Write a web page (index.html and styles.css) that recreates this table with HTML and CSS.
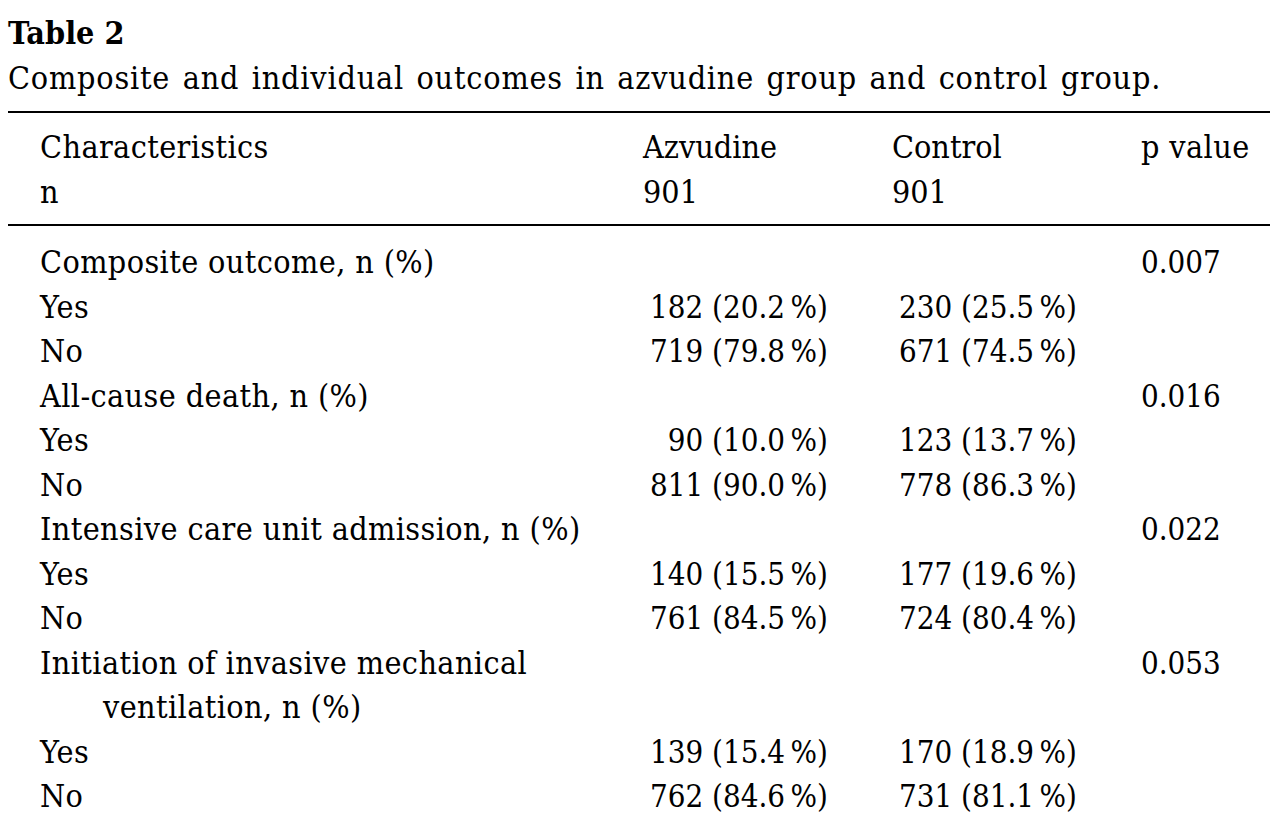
FILE: index.html
```html
<!DOCTYPE html>
<html lang="en">
<head>
<meta charset="utf-8">
<title>Table 2</title>
<link rel="stylesheet" href="styles.css">
</head>
<body>
<div class="page">
  <div class="caption">
    <div class="label">Table 2</div>
    <div class="desc">Composite and individual outcomes in azvudine group and control group.</div>
  </div>
  <div class="table">
    <div class="head">
      <div class="c1">Characteristics<br>n</div>
      <div class="c2">Azvudine<br>901</div>
      <div class="c3">Control<br>901</div>
      <div class="c4">p value</div>
    </div>
    <div class="body">
      <div class="c1">Composite outcome, n (%)</div><div class="num"></div><div class="num"></div><div class="c4">0.007</div>
      <div class="c1">Yes</div><div class="num">182 (20.2&#8201;%)</div><div class="num">230 (25.5&#8201;%)</div><div class="c4"></div>
      <div class="c1">No</div><div class="num">719 (79.8&#8201;%)</div><div class="num">671 (74.5&#8201;%)</div><div class="c4"></div>
      <div class="c1">All-cause death, n (%)</div><div class="num"></div><div class="num"></div><div class="c4">0.016</div>
      <div class="c1">Yes</div><div class="num">90 (10.0&#8201;%)</div><div class="num">123 (13.7&#8201;%)</div><div class="c4"></div>
      <div class="c1">No</div><div class="num">811 (90.0&#8201;%)</div><div class="num">778 (86.3&#8201;%)</div><div class="c4"></div>
      <div class="c1">Intensive care unit admission, n (%)</div><div class="num"></div><div class="num"></div><div class="c4">0.022</div>
      <div class="c1">Yes</div><div class="num">140 (15.5&#8201;%)</div><div class="num">177 (19.6&#8201;%)</div><div class="c4"></div>
      <div class="c1">No</div><div class="num">761 (84.5&#8201;%)</div><div class="num">724 (80.4&#8201;%)</div><div class="c4"></div>
      <div class="c1 hang">Initiation of invasive mechanical ventilation, n (%)</div><div class="num"></div><div class="num"></div><div class="c4">0.053</div>
      <div class="c1">Yes</div><div class="num">139 (15.4&#8201;%)</div><div class="num">170 (18.9&#8201;%)</div><div class="c4"></div>
      <div class="c1">No</div><div class="num">762 (84.6&#8201;%)</div><div class="num">731 (81.1&#8201;%)</div><div class="c4"></div>
    </div>
  </div>
</div>
</body>
</html>
```

FILE: styles.css
```css
html, body {
  margin: 0;
  padding: 0;
  background: #ffffff;
}

.page {
  padding: 11px 0 0 8px;
  font-family: "DejaVu Serif Condensed", "DejaVu Serif", serif;
  font-stretch: condensed;
  font-size: 32px;
  line-height: 44.5px;
  color: #000000;
}

.label {
  font-weight: bold;
}

.desc {
  white-space: nowrap;
  letter-spacing: 0.8px;
  word-spacing: 2.6px;
}

.table {
  margin-top: 11px;
}

.head,
.body {
  display: grid;
  grid-template-columns: 635px 249px 249px 1fr;
}

.head {
  border-top: 2px solid #000;
  border-bottom: 2px solid #000;
  padding: 12px 0 10px;
}

.body {
  padding-top: 14px;
}

.c1 {
  padding-left: 32px;
  letter-spacing: 0.4px;
}

.hang {
  padding-left: 95px;
  text-indent: -63px;
  padding-right: 60px;
}

.num {
  text-align: right;
  padding-right: 64px;
  white-space: nowrap;
  font-size: 31px;
}

.c4 {
  white-space: nowrap;
  font-size: 31px;
}

.head .c4 {
  font-size: 32px;
  letter-spacing: 0.4px;
}
```
